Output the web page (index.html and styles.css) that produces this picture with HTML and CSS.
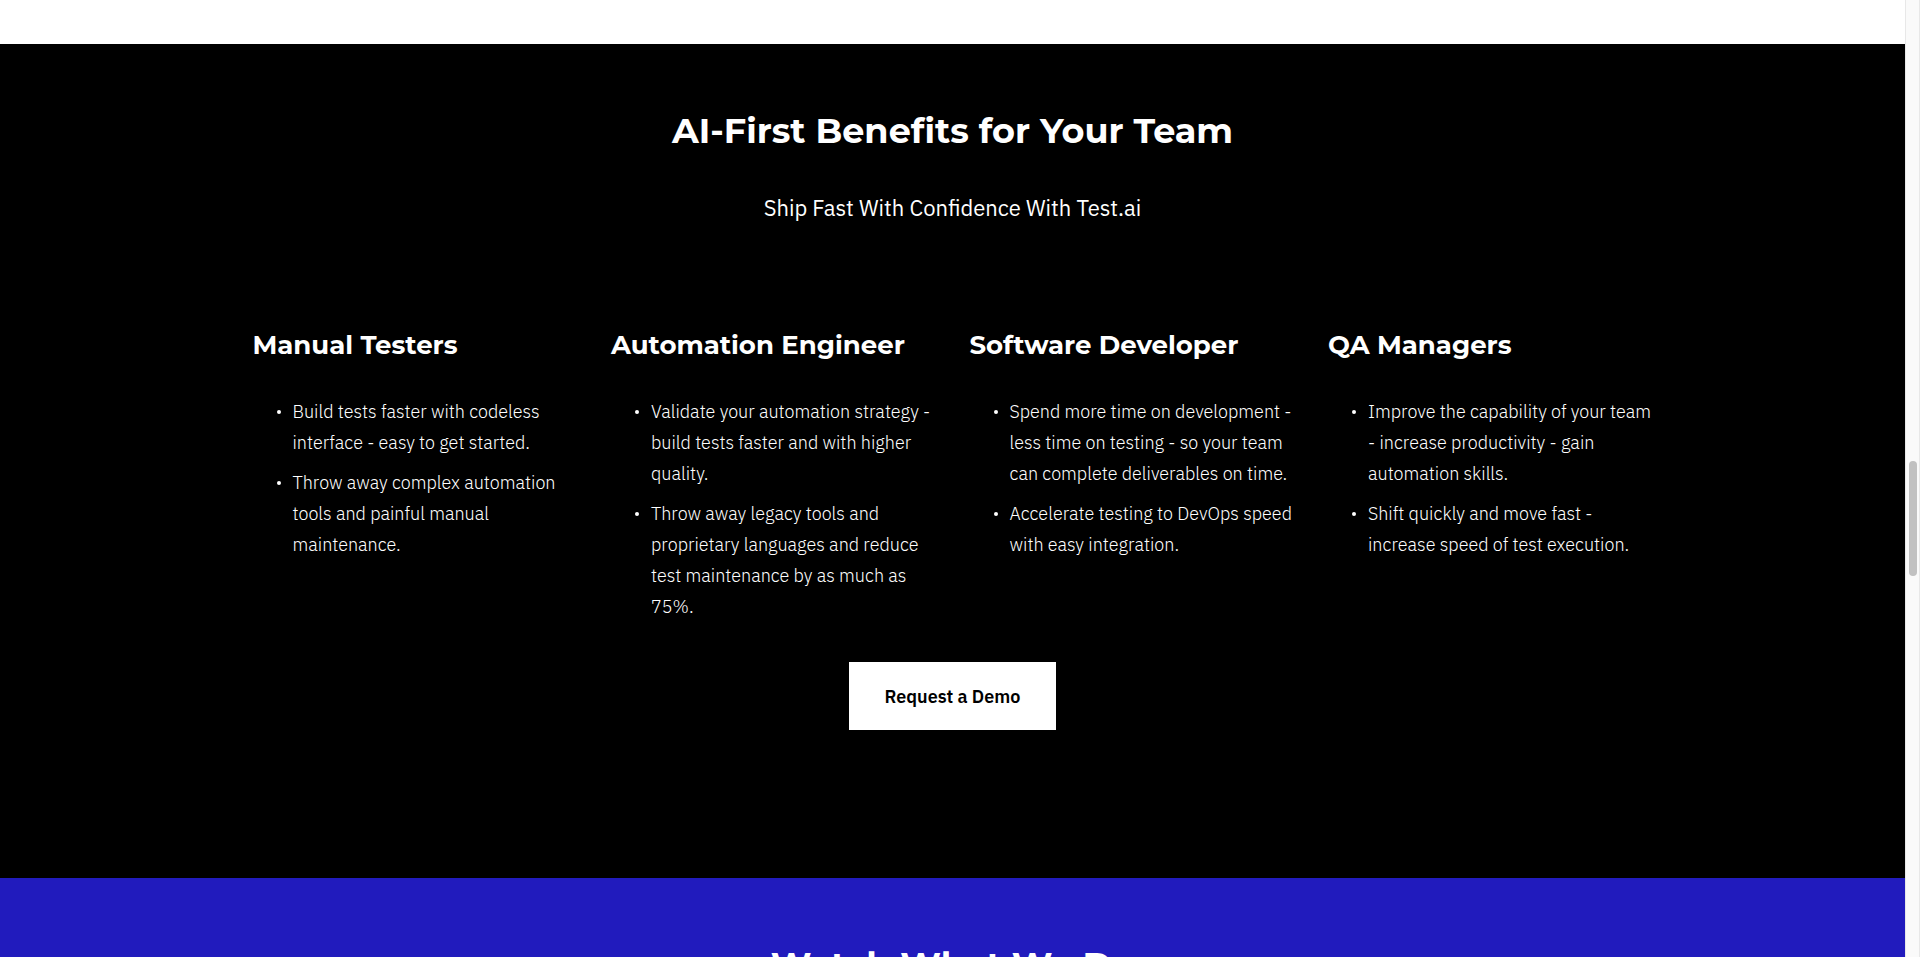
FILE: index.html
```html
<!DOCTYPE html>
<html lang="en">
<head>
<meta charset="utf-8">
<title>AI-First Benefits for Your Team</title>
<link rel="stylesheet" href="styles.css">
</head>
<body>
<div class="viewport">
  <main class="page">
    <section class="benefits">
      <h2 class="section-title">AI-First Benefits for Your Team</h2>
      <p class="subtitle">Ship Fast With Confidence With Test.ai</p>
      <div class="columns">
        <article class="column">
          <h3 class="column-title">Manual Testers</h3>
          <ul class="points">
            <li>Build tests faster with codeless interface - easy to get started.</li>
            <li>Throw away complex automation tools and painful manual maintenance.</li>
          </ul>
        </article>
        <article class="column">
          <h3 class="column-title">Automation Engineer</h3>
          <ul class="points">
            <li>Validate your automation strategy - build tests faster and with higher quality.</li>
            <li>Throw away legacy tools and proprietary languages and reduce test maintenance by as much as 75%.</li>
          </ul>
        </article>
        <article class="column">
          <h3 class="column-title">Software Developer</h3>
          <ul class="points">
            <li>Spend more time on development - less time on testing - so your team can complete deliverables on time.</li>
            <li>Accelerate testing to DevOps speed with easy integration.</li>
          </ul>
        </article>
        <article class="column">
          <h3 class="column-title">QA Managers</h3>
          <ul class="points">
            <li>Improve the capability of your team - increase productivity - gain automation skills.</li>
            <li>Shift quickly and move fast - increase speed of test execution.</li>
          </ul>
        </article>
      </div>
      <a class="demo-button" href="#demo">Request a Demo</a>
    </section>
    <section class="watch">
      <h2 class="section-title">Watch What We Do</h2>
    </section>
  </main>
  <div class="scroll-track"><div class="scroll-thumb"></div></div>
</div>
</body>
</html>
```
FILE: styles.css
```css
* {
  box-sizing: border-box;
}

body {
  margin: 0;
  background: #fff;
  color: #fff;
  font-family: "IBM Plex Sans", Roboto, sans-serif;
  font-size: 18px;
  font-weight: 300;
  line-height: 31px;
}

.viewport {
  display: flex;
  height: 100vh;
  overflow: hidden;
}

.page {
  flex: 1;
  padding-top: 44px;
}

.benefits {
  display: flex;
  flex-direction: column;
  align-items: center;
  padding: 64px 24px 148px;
  background: #000;
}

.section-title {
  margin: 0;
  font-family: Montserrat, Inter, sans-serif;
  font-size: 35px;
  font-weight: 700;
  font-variant-ligatures: none;
  line-height: 46px;
  text-align: center;
}

.subtitle {
  margin: 36px 0 0;
  font-size: 22px;
  font-weight: 400;
  line-height: 36px;
  text-align: center;
}

.columns {
  display: grid;
  grid-template-columns: repeat(4, 1fr);
  gap: 34px;
  width: 100%;
  max-width: 1400px;
  margin-top: 102px;
}

.column-title {
  margin: 0;
  font-family: Montserrat, Inter, sans-serif;
  font-size: 26px;
  font-weight: 700;
  line-height: 34px;
}

.points {
  margin: 34px 0 0;
  padding-left: 40px;
  list-style: none;
}

.points li {
  position: relative;
}

.points li + li {
  margin-top: 9px;
}

.points li::before {
  content: "";
  position: absolute;
  top: 14px;
  left: -16px;
  width: 4px;
  height: 4px;
  border-radius: 50%;
  background: #fff;
}

.demo-button {
  margin-top: 40px;
  padding: 19px 36px 18px;
  background: #fff;
  color: #000;
  font-weight: 600;
  text-decoration: none;
}

.watch {
  padding: 64px 24px;
  background: #211bbd;
}

.scroll-track {
  width: 15px;
  padding: 461px 2px 0 3px;
  border-right: 1px solid #e8e8e8;
  border-left: 1px solid #e8e8e8;
  background: #fafafa;
}

.scroll-thumb {
  height: 115px;
  border-radius: 4px;
  background: #c1c1c1;
}
```
